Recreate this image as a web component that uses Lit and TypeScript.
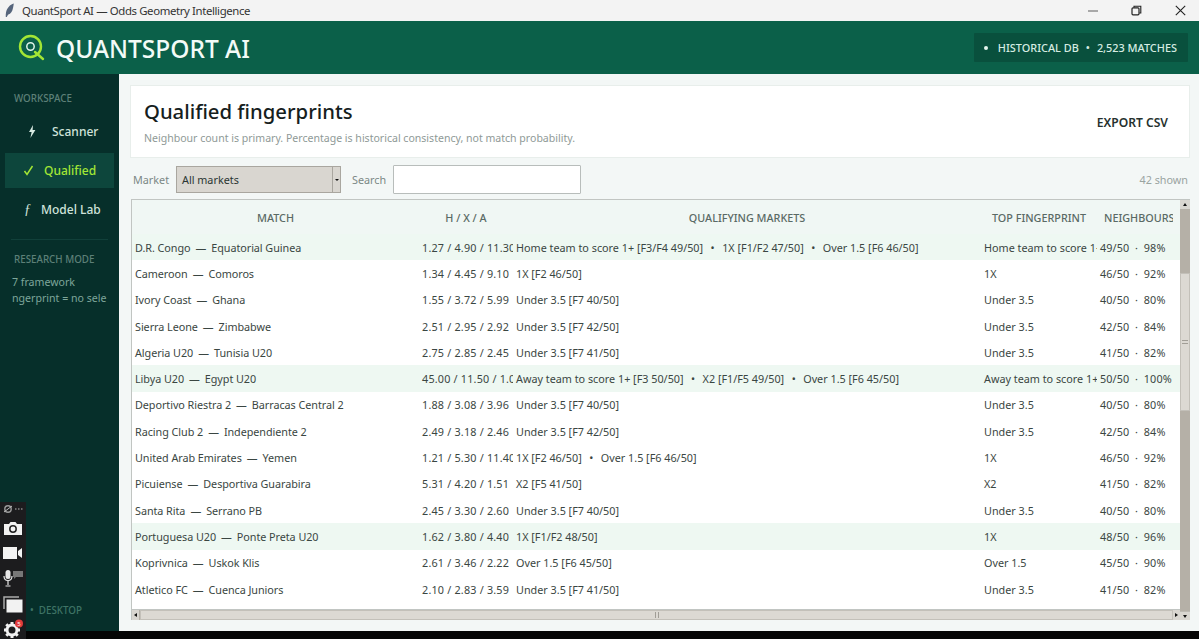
import { LitElement, html, css } from "lit";
import { customElement } from "lit/decorators.js";

type Row = [string, string, string, string, string, string, boolean?];
const rows: Row[] = [
  ["D.R. Congo", "Equatorial Guinea", "1.27 / 4.90 / 11.30", "Home team to score 1+ [F3/F4 49/50]|1X [F1/F2 47/50]|Over 1.5 [F6 46/50]", "Home team to score 1+", "49/50  ·  98%", true],
  ["Cameroon", "Comoros", "1.34 / 4.45 / 9.10", "1X [F2 46/50]", "1X", "46/50  ·  92%"],
  ["Ivory Coast", "Ghana", "1.55 / 3.72 / 5.99", "Under 3.5 [F7 40/50]", "Under 3.5", "40/50  ·  80%"],
  ["Sierra Leone", "Zimbabwe", "2.51 / 2.95 / 2.92", "Under 3.5 [F7 42/50]", "Under 3.5", "42/50  ·  84%"],
  ["Algeria U20", "Tunisia U20", "2.75 / 2.85 / 2.45", "Under 3.5 [F7 41/50]", "Under 3.5", "41/50  ·  82%"],
  ["Libya U20", "Egypt U20", "45.00 / 11.50 / 1.03", "Away team to score 1+ [F3 50/50]|X2 [F1/F5 49/50]|Over 1.5 [F6 45/50]", "Away team to score 1+", "50/50  ·  100%", true],
  ["Deportivo Riestra 2", "Barracas Central 2", "1.88 / 3.08 / 3.96", "Under 3.5 [F7 40/50]", "Under 3.5", "40/50  ·  80%"],
  ["Racing Club 2", "Independiente 2", "2.49 / 3.18 / 2.46", "Under 3.5 [F7 42/50]", "Under 3.5", "42/50  ·  84%"],
  ["United Arab Emirates", "Yemen", "1.21 / 5.30 / 11.40", "1X [F2 46/50]|Over 1.5 [F6 46/50]", "1X", "46/50  ·  92%"],
  ["Picuiense", "Desportiva Guarabira", "5.31 / 4.20 / 1.51", "X2 [F5 41/50]", "X2", "41/50  ·  82%"],
  ["Santa Rita", "Serrano PB", "2.45 / 3.30 / 2.60", "Under 3.5 [F7 40/50]", "Under 3.5", "40/50  ·  80%"],
  ["Portuguesa U20", "Ponte Preta U20", "1.62 / 3.80 / 4.40", "1X [F1/F2 48/50]", "1X", "48/50  ·  96%", true],
  ["Koprivnica", "Uskok Klis", "2.61 / 3.46 / 2.22", "Over 1.5 [F6 45/50]", "Over 1.5", "45/50  ·  90%"],
  ["Atletico FC", "Cuenca Juniors", "2.10 / 2.83 / 3.59", "Under 3.5 [F7 41/50]", "Under 3.5", "41/50  ·  82%"],
];

@customElement("app-root")
export class AppRoot extends LitElement {
  static styles = css`
    :host { display: block; width: 1199px; height: 639px; overflow: hidden; position: relative; background: #050505;
      font-family: "Noto Sans", "Open Sans", sans-serif; color: #33413d; }
    * { box-sizing: border-box; }
    .titlebar { height: 21px; background: #f3f3f3; display: flex; align-items: center; padding-left: 5px; color: #333; font-size: 11.4px; letter-spacing: -0.38px; }
    .titlebar .name { margin-left: 7px; flex: 1; }
    .wc { display: flex; align-items: center; padding-right: 13px; gap: 33px; }
    .wc svg { display: block; }
    .header { height: 53px; background: #0b6049; display: flex; align-items: center; padding: 0 11px 0 18px; }
    .logo { margin-right: 11px; display: block; }
    .brand { flex: 1; color: #f3fbf7; font-size: 24.5px; font-weight: 500; padding-top: 2px; }
    .db { height: 29px; background: #09503d; color: #d6ece2; font-size: 10.9px; font-weight: 500; display: flex; align-items: center; padding: 0 11px 0 10px; white-space: pre; border-radius: 1px; }
    .dot { width: 4px; height: 4px; background: #e6f5ee; border-radius: 50%; margin-right: 10px; }
    .db .sep { margin: 0 7px; }
    .main { height: 557px; display: flex; }
    .side { width: 119px; background: #062f2a; display: flex; flex-direction: column; padding: 0 5px; position: relative; }
    .sh { font-size: 9.8px; font-weight: 500; color: #5d8078; padding-left: 9px; line-height: 13px; }
    .sh.top { margin-top: 18px; margin-bottom: 9px; }
    .nav { height: 35px; margin-bottom: 4px; display: flex; align-items: center; font-size: 12px; color: #cfe3db; font-weight: 500; }
    .nav .ic { width: 47px; padding-left: 23px; display: flex; flex: none; }
    .nav.active { background: #0d463c; color: #a3e635; }
    .nav.active .ic { width: 39px; padding-left: 18px; }
    .nav.lab .ic { width: 36px; padding-left: 19px; }
    .fn { font-family: "Liberation Serif", serif; font-style: italic; font-size: 14px; line-height: 14px; }
    .rule { height: 1px; background: #11403a; margin: 8px 6px 13px 6px; }
    .research { display: flex; flex-direction: column; }
    .research .sh { margin-bottom: 8px; }
    .mono { font-size: 10.6px; color: #7ea69a; line-height: 16px; white-space: pre; padding-left: 7px; overflow: hidden; }
    .desk { margin-top: auto; margin-bottom: 14px; padding-left: 25px; font-size: 9.8px; color: #3f7466; font-weight: 500; white-space: pre; }
    .content { flex: 1; background: #f3f7f6; padding: 11px 9px 0 11px; display: flex; flex-direction: column; height: 557px; }
    .card { height: 73px; background: #fff; border: 1px solid #e8eeeb; display: flex; align-items: center; padding: 0 21px 0 13px; flex: none; }
    .card .txt { flex: 1; }
    h1 { margin: 0; font-size: 20.3px; font-weight: 500; color: #15201d; line-height: 27px; }
    .sub { font-size: 10.55px; color: #8f9a97; margin-top: 5px; line-height: 16px; }
    .export { font-size: 12.1px; font-weight: 600; color: #26312e; padding-top: 2px; }
    .tools { height: 29px; margin-top: 7px; display: flex; align-items: center; font-size: 10.8px; color: #7b8885; flex: none; }
    .tools .lab { width: 44px; padding-left: 3px; margin-right: 2px; }
    .select { width: 165px; height: 27px; background: #d9d6d0; border: 1px solid #a9a69f; color: #2a3532; display: flex; align-items: center; padding-left: 5px; position: relative; }
    .select .arrow { position: absolute; right: 0; top: 0; bottom: 0; width: 8px; border-left: 1px solid #a9a69f; display: flex; align-items: center; justify-content: center; }
    .tri { width: 0; height: 0; border-left: 2px solid transparent; border-right: 2px solid transparent; border-top: 2px solid #111; }
    .tools .lab2 { margin-left: 11px; margin-right: 7px; }
    .search { width: 188px; height: 29px; background: #fff; border: 1px solid #b8bdbb; border-radius: 1px; }
    .count { margin-left: auto; padding-right: 2px; color: #9aa4a1; }
    .tablewrap { margin-top: 5px; height: 421px; flex: none; display: grid; grid-template-columns: 1048px 10px; grid-template-rows: 410px 10px; border-top: 1px solid #c1c5c2; border-left: 1px solid #c1c5c2; margin-left: 1px; width: 1059px; }
    .table { overflow: hidden; display: flex; flex-direction: column; font-size: 10.8px; background: #fff; border-bottom: 1px solid #c1c5c2; }
    .row { display: grid; grid-template-columns: 287px 94px 468px 116px 76px; height: 26.3px; align-items: center; color: #3a4642; flex: none; }
    .row.hi { background: #eef8f2; }
    .row > div { overflow: hidden; white-space: pre; padding-left: 3px; }
    .row > .nm { letter-spacing: -0.05px; }
    .row > .odds { letter-spacing: 0.2px; }
    .row > .nb { padding-left: 3px; letter-spacing: 0.1px; }
    .row.head { height: 34px; background: #f0f7f4; color: #5a6a65; font-weight: 500; }
    .row.head > div { text-align: center; padding: 0; }
    .row.head > .n { text-align: left; padding-left: 7px; }
    .dash { margin: 0 5px; }
    .bul { margin: 0 7.5px; }
    .vbar { background: #b5b0a7; display: flex; flex-direction: column; height: 420px; grid-row: 1 / 3; grid-column: 2; }
    .btn { height: 9px; flex: none; background: #d9d6d0; display: flex; align-items: center; justify-content: center; }
    .vtrough { flex: none; height: 64px; }
    .vthumb { flex: none; height: 138px; background: #dcd9d3; border: 1px solid #c3c0b9; display: flex; flex-direction: column; align-items: stretch; justify-content: center; gap: 2px; padding: 0 1px; }
    .vthumb i { display: block; height: 1px; background: #a19e97; }
    .vend { flex: 1; }
    .vlast { border-top: 1px solid #bdbab3; }
    .hbar { background: #b5b0a7; display: flex; align-items: stretch; height: 10px; grid-row: 2; grid-column: 1; }
    .hbar .btn { width: 7px; height: 10px; }
    .htrough { width: 1px; }
    .hthumb { flex: 1; background: #dcd9d3; border: 1px solid #c3c0b9; display: flex; justify-content: center; align-items: stretch; gap: 2px; padding: 1px 0; }
    .hthumb i { display: block; width: 1px; background: #a19e97; }
    .u { border-bottom: 3px solid #111; border-left: 2.5px solid transparent; border-right: 2.5px solid transparent; width: 0; height: 0; }
    .d { border-top: 3px solid #111; border-left: 2.5px solid transparent; border-right: 2.5px solid transparent; width: 0; height: 0; }
    .l { border-right: 3px solid #111; border-top: 2.5px solid transparent; border-bottom: 2.5px solid transparent; width: 0; height: 0; }
    .r { border-left: 3px solid #111; border-top: 2.5px solid transparent; border-bottom: 2.5px solid transparent; width: 0; height: 0; }
    .taskbar { position: absolute; left: 0; top: 502px; width: 26px; height: 137px; background: #1c1c1e; display: flex; flex-direction: column; align-items: center; overflow: hidden; }
    .taskbar svg { display: block; flex: none; }
    .t1 { margin-top: 2px; } .t2 { margin-top: 8px; } .t3 { margin-top: 12px; } .t4 { margin-top: 11px; } .t5 { margin-top: 9px; } .t6 { margin-top: 6px; }
  `;

  private markets(text: string) {
    return text.split("|").map((part, i) => html`${i > 0 ? html`<span class="bul">•</span>` : ""}${part}`);
  }

  render() {
    return html`
      <div class="titlebar">
        <svg width="10" height="15" viewBox="0 0 10 15"><path d="M8.8 0.5C5 1.5 2 5 1 9.5c-.3 1.5-.3 3-.2 4.5l1-.1c.5-1 1-1.8 1.5-2.4 2.5-.6 4-3 4.7-6.5.4-1.8.7-3.5.8-4.5z" fill="#56657c"/></svg>
        <span class="name">QuantSport AI — Odds Geometry Intelligence</span>
        <div class="wc">
          <svg width="10" height="10" viewBox="0 0 10 10"><path d="M0 5h10" stroke="#777" stroke-width="1.2"/></svg>
          <svg width="11" height="11" viewBox="0 0 11 11"><path d="M3 2.5V1.2h6.8V8H8.3" fill="none" stroke="#222" stroke-width="1.1"/><rect x="1" y="2.8" width="7" height="7" rx="1" fill="none" stroke="#222" stroke-width="1.2"/></svg>
          <svg width="11" height="11" viewBox="0 0 11 11"><path d="M.8.8l9.4 9.4M10.2.8L.8 10.2" stroke="#222" stroke-width="1.1"/></svg>
        </div>
      </div>
      <div class="header">
        <svg class="logo" width="27" height="27" viewBox="0 0 27 27">
          <circle cx="12.5" cy="12.5" r="10.5" fill="none" stroke="#a3e635" stroke-width="2.4"/>
          <circle cx="12.5" cy="12.5" r="3.7" fill="none" stroke="#dff3e8" stroke-width="1.5"/>
          <path d="M17 18l8 7" stroke="#a3e635" stroke-width="2.4" stroke-linecap="round"/>
        </svg>
        <div class="brand">QUANTSPORT AI</div>
        <div class="db"><span class="dot"></span><span>HISTORICAL DB</span><span class="sep">•</span><span>2,523 MATCHES</span></div>
      </div>
      <div class="main">
        <aside class="side">
          <div class="sh top">WORKSPACE</div>
          <div class="nav"><span class="ic"><svg width="8" height="13" viewBox="0 0 8 13"><path d="M5 0L1 7h2.6L2.4 13 7.4 5H4.6z" fill="#d9ebe3"/></svg></span>Scanner</div>
          <div class="nav active"><span class="ic"><svg width="11" height="11" viewBox="0 0 11 11"><path d="M1.5 6l2.5 3.5L9.5 1" fill="none" stroke="#a3e635" stroke-width="1.5"/></svg></span>Qualified</div>
          <div class="nav lab"><span class="ic"><span class="fn">ƒ</span></span>Model Lab</div>
          <div class="rule"></div>
          <div class="research">
            <div class="sh">RESEARCH MODE</div>
            <div class="mono">7 framework
ngerprint = no sele</div>
          </div>
          <div class="desk">•  DESKTOP</div>
        </aside>
        <section class="content">
          <div class="card">
            <div class="txt">
              <h1>Qualified fingerprints</h1>
              <div class="sub">Neighbour count is primary. Percentage is historical consistency, not match probability.</div>
            </div>
            <div class="export">EXPORT CSV</div>
          </div>
          <div class="tools">
            <span class="lab">Market</span>
            <div class="select">All markets<span class="arrow"><span class="tri"></span></span></div>
            <span class="lab2">Search</span>
            <div class="search"></div>
            <span class="count">42 shown</span>
          </div>
          <div class="tablewrap">
            <div class="table">
              <div class="row head"><div>MATCH</div><div>H / X / A</div><div>QUALIFYING MARKETS</div><div>TOP FINGERPRINT</div><div class="n">NEIGHBOURS</div></div>
              ${rows.map((r) => html`<div class="row ${r[6] ? "hi" : ""}"><div class="nm">${r[0]}<span class="dash">—</span>${r[1]}</div><div class="odds">${r[2]}</div><div>${this.markets(r[3])}</div><div>${r[4]}</div><div class="nb">${r[5]}</div></div>`)}
            </div>
            <div class="vbar">
              <div class="btn"><span class="u"></span></div>
              <div class="vtrough"></div>
              <div class="vthumb"><i></i><i></i></div>
              <div class="vend"></div>
              <div class="btn vlast"><span class="d"></span></div>
            </div>
            <div class="hbar">
              <div class="btn"><span class="l"></span></div>
              <div class="htrough"></div>
              <div class="hthumb"><i></i><i></i></div>
              <div class="btn"><span class="r"></span></div>
            </div>
          </div>
        </section>
      </div>
      <div class="taskbar">
        <svg class="t1" width="22" height="10" viewBox="0 0 22 10"><circle cx="6" cy="5" r="3.2" fill="none" stroke="#9a9a9a" stroke-width="1.4"/><path d="M2 8l8-6" stroke="#bbb" stroke-width="1"/><path d="M13 5h1.5M16 5h1.5M19 5h1.5" stroke="#bbb" stroke-width="1.2"/></svg>
        <svg class="t2" width="20" height="13" viewBox="0 0 20 13"><path d="M1 2h5l1.5-2h5L14 2h5v11H1z" fill="#f2f2f2"/><circle cx="10" cy="7" r="3.2" fill="none" stroke="#222" stroke-width="1.5"/></svg>
        <svg class="t3" width="20" height="12" viewBox="0 0 20 12"><rect x="0" y="0" width="14" height="12" fill="#f2f2f2"/><path d="M15 4l4-3v10l-4-3z" fill="#f2f2f2"/></svg>
        <svg class="t4" width="20" height="17" viewBox="0 0 20 17"><rect x="2.5" y="0" width="5" height="9" rx="2.5" fill="#e8e8e8"/><path d="M1 6c0 3 2 4.5 4 4.5S9 9 9 6M5 11v4M2.5 16h5" fill="none" stroke="#e8e8e8" stroke-width="1.2"/><path d="M10 1h10v6H13l-2 2V7h-1z" fill="#777"/></svg>
        <svg class="t5" width="20" height="17" viewBox="0 0 20 17"><path d="M1 13V1h15" fill="none" stroke="#aaa" stroke-width="1.5"/><rect x="3.5" y="3.5" width="16" height="13" fill="#f2f2f2"/></svg>
        <svg class="t6" width="22" height="20" viewBox="0 0 22 20">
          <circle cx="10" cy="11" r="5" fill="none" stroke="#f2f2f2" stroke-width="3"/>
          <path d="M10 3v3M10 16v3M2 11h3M15 11h3M4.3 5.3l2.2 2.2M13.5 14.5l2.2 2.2M15.7 5.3l-2.2 2.2M6.5 14.5l-2.2 2.2" stroke="#f2f2f2" stroke-width="3"/>
          <circle cx="17" cy="4.5" r="4" fill="#e23b3b"/>
          <text x="17" y="6.5" font-size="6" fill="#fff" text-anchor="middle" font-family="Noto Sans">5</text>
        </svg>
      </div>
    `;
  }
}
